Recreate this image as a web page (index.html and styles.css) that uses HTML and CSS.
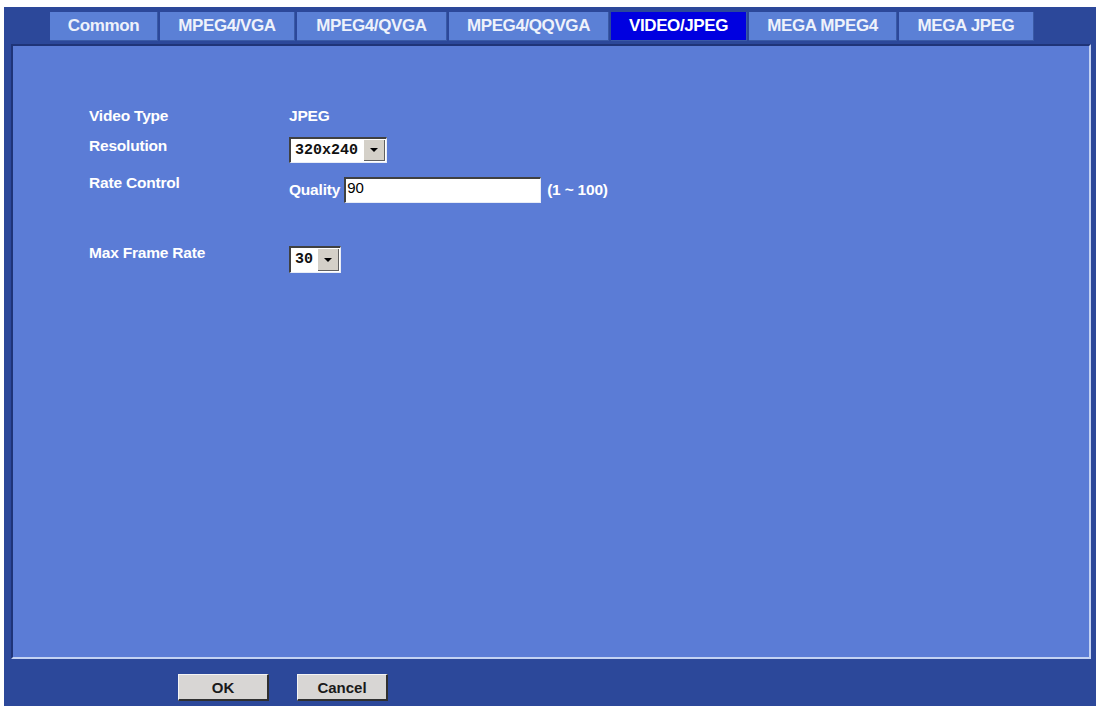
FILE: index.html
```html
<!DOCTYPE html>
<html lang="en">
<head>
	<meta charset="utf-8">
	<title>Video Settings - VIDEO/JPEG</title>
	<link rel="stylesheet" href="styles.css">
</head>
<body>
	<div class="frame">
		<div class="tabs">
			<a class="tab tab-common">Common</a>
			<a class="tab tab-vga">MPEG4/VGA</a>
			<a class="tab tab-qvga">MPEG4/QVGA</a>
			<a class="tab tab-qqvga">MPEG4/QQVGA</a>
			<a class="tab tab-jpeg active">VIDEO/JPEG</a>
			<a class="tab tab-mmpeg">MEGA MPEG4</a>
			<a class="tab tab-mjpeg">MEGA JPEG</a>
		</div>

		<div class="panel">
			<div class="row row-type">
				<div class="label">Video Type</div>
				<div class="value">JPEG</div>
			</div>
			<div class="row row-res">
				<div class="label">Resolution</div>
				<div class="value">
					<span class="select select-res">
						<span class="select-text">320x240</span>
						<span class="select-btn"><span class="arrow"></span></span>
					</span>
				</div>
			</div>
			<div class="row row-rate">
				<div class="label">Rate Control</div>
				<div class="value value-rate">
					<span class="inline-label">Quality</span>
					<span class="textbox">90</span>
					<span class="hint">(1 ~ 100)</span>
				</div>
			</div>
			<div class="row row-fps">
				<div class="label">Max Frame Rate</div>
				<div class="value value-fps">
					<span class="select select-fps">
						<span class="select-text">30</span>
						<span class="select-btn"><span class="arrow"></span></span>
					</span>
				</div>
			</div>
		</div>

		<div class="buttons">
			<button class="btn">OK</button>
			<button class="btn">Cancel</button>
		</div>
	</div>
</body>
</html>
```

FILE: styles.css
```css
body {
	margin: 0;
	background-color: #ffffff;
	font-family: "Liberation Sans", Arial, sans-serif;
}
.frame {
	margin: 7px 4px 0 4px;
	height: 699px;
	background-color: #2c489a;
	display: flex;
	flex-direction: column;
}
.tabs {
	display: flex;
	gap: 2px;
	padding: 5px 0 0 46px;
	height: 29px;
}
.tab {
	display: flex;
	align-items: center;
	justify-content: center;
	height: 29px;
	box-sizing: border-box;
	background-color: #5b80d6;
	border-right: 1px solid #3a5aa6;
	border-bottom: 1px solid #3a5aa6;
	color: #eef2fb;
	font-weight: bold;
	font-size: 17px;
	letter-spacing: -0.4px;
}
.tab.active {
	background-color: #0000e0;
	color: #ffffff;
}
.tab-common { width: 108px; }
.tab-vga { width: 135px; }
.tab-qvga { width: 150px; }
.tab-qqvga { width: 160px; }
.tab-jpeg { width: 136px; }
.tab-mmpeg { width: 148px; }
.tab-mjpeg { width: 135px; }

.panel {
	margin: 3px 5px 0 7px;
	height: 615px;
	box-sizing: border-box;
	background-color: #5b7cd6;
	border-top: 2px solid #1f3478;
	border-left: 2px solid #1f3478;
	border-right: 2px solid #c3d2f3;
	border-bottom: 2px solid #c3d2f3;
	padding: 61px 0 0 76px;
	color: #ffffff;
	font-size: 15.5px;
	font-weight: bold;
}
.row {
	display: flex;
	align-items: flex-start;
}
.label {
	width: 200px;
	line-height: 18px;
	letter-spacing: -0.2px;
}
.value {
	line-height: 18px;
	display: flex;
	align-items: center;
	letter-spacing: -0.2px;
}
.row-res { margin-top: 12px; }
.row-rate { margin-top: 11px; }
.row-fps { margin-top: 41px; }
.value-rate { padding-top: 3px; }
.value-fps { padding-top: 2px; }

.select {
	display: flex;
	height: 26px;
	box-sizing: border-box;
	background-color: #ffffff;
	border-top: 2px solid #404040;
	border-left: 2px solid #404040;
	border-right: 1px solid #e8ecf6;
	border-bottom: 1px solid #e8ecf6;
}
.select-res { width: 98px; }
.select-fps { width: 52px; height: 27px; }
.select-text {
	flex: 1;
	color: #111111;
	font-family: "Liberation Mono", "Courier New", monospace;
	font-size: 15px;
	font-weight: bold;
	letter-spacing: 0;
	line-height: 23px;
	padding-left: 4px;
}
.select-btn {
	width: 20px;
	margin: 1px;
	background-color: #d4d0c8;
	border-right: 1px solid #606060;
	border-bottom: 1px solid #606060;
	display: flex;
	align-items: center;
	justify-content: center;
}
.arrow {
	width: 0;
	height: 0;
	border-left: 4px solid transparent;
	border-right: 4px solid transparent;
	border-top: 4px solid #000000;
}

.inline-label {
	margin-right: 4px;
}
.textbox {
	width: 197px;
	height: 26px;
	box-sizing: border-box;
	background-color: #ffffff;
	border-top: 2px solid #404040;
	border-left: 2px solid #404040;
	border-right: 1px solid #e8ecf6;
	border-bottom: 1px solid #e8ecf6;
	color: #000000;
	font-weight: normal;
	font-size: 15px;
	letter-spacing: 0;
	line-height: 18px;
	padding-left: 1px;
}
.hint {
	margin-left: 6px;
}

.buttons {
	flex: 1;
	display: flex;
	gap: 28px;
	padding: 15px 0 0 174px;
}
.btn {
	width: 91px;
	height: 27px;
	background-color: #d8d6d4;
	border-top: 1px solid #f4f4f4;
	border-left: 1px solid #f4f4f4;
	border-right: 2px solid #303030;
	border-bottom: 2px solid #303030;
	font-family: "Liberation Sans", Arial, sans-serif;
	font-size: 15px;
	font-weight: bold;
	color: #1a1a1a;
	padding: 0;
}
```
